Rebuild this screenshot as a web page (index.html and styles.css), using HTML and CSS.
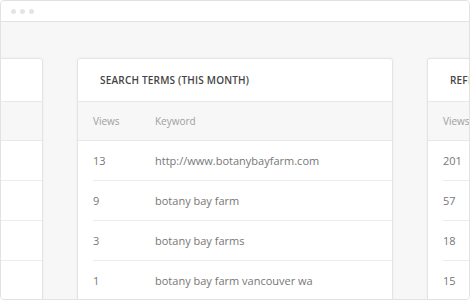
FILE: index.html
```html
<!DOCTYPE html>
<html lang="en">
<head>
    <meta charset="UTF-8">
    <title>Search Terms</title>
    <link rel="stylesheet" href="styles.css">
</head>
<body>
    <div class="window">
        <div class="titlebar">
            <span class="dot"></span>
            <span class="dot"></span>
            <span class="dot"></span>
        </div>

        <div class="content">
            <!-- left card sits mostly off-screen, only its empty right side shows -->
            <div class="card">
                <div class="card-header"></div>
                <div class="table-head"></div>
                <div class="row"></div>
                <div class="row"></div>
                <div class="row"></div>
                <div class="row"></div>
            </div>

            <div class="card">
                <div class="card-header">Search terms (this month)</div>
                <div class="table-head">
                    <span class="col-views">Views</span>
                    <span>Keyword</span>
                </div>
                <div class="row"><span class="col-views">13</span><span>http://www.botanybayfarm.com</span></div>
                <div class="row"><span class="col-views">9</span><span>botany bay farm</span></div>
                <div class="row"><span class="col-views">3</span><span>botany bay farms</span></div>
                <div class="row"><span class="col-views">1</span><span>botany bay farm vancouver wa</span></div>
            </div>

            <div class="card">
                <div class="card-header">Referrers</div>
                <div class="table-head">
                    <span class="col-views">Views</span>
                    <span>Source</span>
                </div>
                <div class="row"><span class="col-views">201</span><span>google.com</span></div>
                <div class="row"><span class="col-views">57</span><span>facebook.com</span></div>
                <div class="row"><span class="col-views">18</span><span>bing.com</span></div>
                <div class="row"><span class="col-views">15</span><span>yahoo.com</span></div>
            </div>
        </div>
    </div>
</body>
</html>
```

FILE: styles.css
```css
* {
    margin: 0;
    padding: 0;
    box-sizing: border-box;
}

body {
    font-family: 'Open Sans', 'Liberation Sans', sans-serif;
    background: #fff;
    color: #777;
}

.window {
    width: 470px;
    height: 300px;
    border: 1px solid #e2e2e2;
    border-radius: 4px;
    background: #f7f7f7;
    overflow: hidden;
}

.titlebar {
    height: 21px;
    background: #fff;
    border-bottom: 1px solid #e2e2e2;
    display: flex;
    align-items: center;
    gap: 4px;
    padding-left: 10px;
}

.dot {
    width: 5px;
    height: 5px;
    border-radius: 50%;
    background: #e4e4e4;
}

.content {
    display: flex;
    justify-content: center;
    gap: 34px;
    padding-top: 36px;
}

.card {
    flex: 0 0 316px;
    background: #fff;
    border: 1px solid #e4e4e4;
    border-radius: 3px 3px 0 0;
    box-shadow: 0 0 3px rgba(0,0,0,0.05);
}

.card-header {
    height: 43px;
    display: flex;
    align-items: center;
    padding-left: 22px;
    font-size: 10px;
    font-weight: 600;
    letter-spacing: 0.2px;
    text-transform: uppercase;
    color: #444;
    border-bottom: 1px solid #e8e8e8;
}

.table-head {
    height: 39px;
    display: flex;
    align-items: center;
    padding-left: 15px;
    background: #f7f7f7;
    border-bottom: 1px solid #e8e8e8;
    font-size: 10px;
    color: #a0a0a0;
}

.col-views {
    width: 62px;
    flex: none;
}

.row {
    height: 40px;
    display: flex;
    align-items: center;
    margin-left: 15px;
    border-bottom: 1px solid #ececec;
    font-size: 11px;
    color: #777;
}
```
